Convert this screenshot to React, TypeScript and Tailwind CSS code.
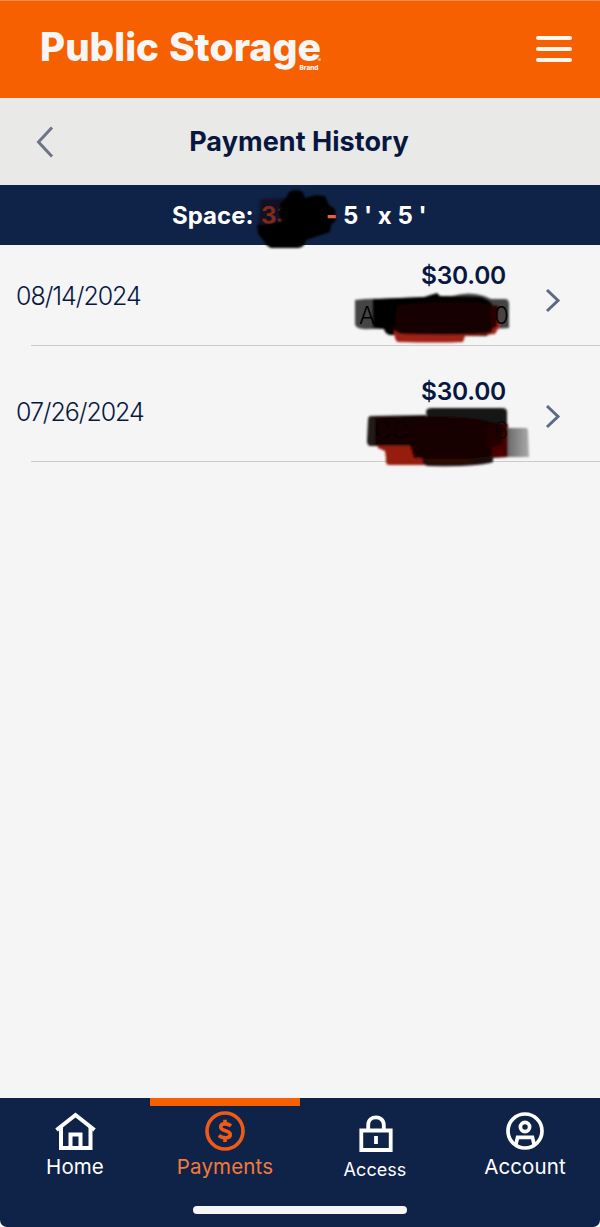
import type { ReactNode } from "react";

type Payment = {
  date: string;
  amount: string;
  method: ReactNode;
  scribble: ReactNode;
};

type Tab = {
  label: string;
  icon: ReactNode;
  active?: boolean;
  labelClass: string;
};

const payments: Payment[] = [
  {
    date: "08/14/2024",
    amount: "$30.00",
    method: (
      <>
        <text x="19" y="74" fontSize="24" fontWeight="300" fill="#000">A</text>
        <text x="154" y="74" fontSize="24" fontWeight="300" fill="#000">0</text>
      </>
    ),
    scribble: (
      <g filter="url(#soft)">
        <path d="M15 50 Q30 48 40 49 L112 46 Q130 41 144 46 L151 49 L166 49 Q169 50 169 54 L169 78 L150 79 L30 79 Q15 80 15 74 Z" fill="#000" fillOpacity=".72" />
        <path d="M33 49 L84 47 L97 43 L100 46 L140 47 Q150 50 153 56 L152 83 L146 86 L50 85 Q45 84 44 79 L33 77 Z" fill="#000" />
        <path d="M54 78 L148 60 L157 55 L159 77 L155 84 L125 86 L123 92 Q100 93 58 92 Q54 91 54 78 Z" fill="#a02313" />
        <path d="M57 55 Q100 50 148 53 L153 60 L152 82 Q142 86 60 84 L54 80 Z" fill="#170201" />
        <path d="M151 56 L158 55 L157 76 L151 80 Z" fill="#2a0504" />
      </g>
    ),
  },
  {
    date: "07/26/2024",
    amount: "$30.00",
    method: (
      <>
        <text x="34" y="73" fontSize="24" fontWeight="300" fill="#000" fillOpacity=".6">CC</text>
        <text x="154" y="73" fontSize="24" fontWeight="300" fill="#000" fillOpacity=".6">6</text>
      </>
    ),
    scribble: (
      <g filter="url(#soft)">
        <path d="M160 62 L186 62 Q188 62 188 66 L189 91 L160 91 Z" fill="url(#fade)" />
        <path d="M37 78 L90 76 L140 90 L130 98 L82 99 L49 99 Q45 99 46 92 L45 85 L38 82 Z" fill="#961a07" />
        <path d="M86 46 Q86 42 92 42 L162 42 Q167 42 167 46 L167 65 L90 65 Z" fill="#151716" />
        <path d="M31 50 L86 49 L90 80 L31 80 Q27 80 27 75 L28 54 Q28 50 31 50 Z" fill="#201a19" />
        <path d="M82 92 L153 90 L153 96 Q140 101 88 100 Q82 99 82 92 Z" fill="#1c1110" />
        <path d="M84 91 L138 91 L128 98 L88 98 Z" fill="#2c0703" />
        <path d="M35 52 Q95 48 138 53 L160 58 L155 90 L125 93 L74 92 L70 79 L35 79 Z" fill="#190201" />
        <path d="M152 60 L168 58 L168 91 L152 92 Z" fill="#480601" />
        <path d="M146 58 L165 60 L162 78 L146 84 Z" fill="#230301" />
      </g>
    ),
  },
];

const tabs: Tab[] = [
  {
    label: "Home",
    labelClass: "text-[20.5px] tracking-[0.1px]",
    icon: (
      <svg width="42" height="42" viewBox="0 0 42 42" fill="none" stroke="#fff" strokeWidth="4">
        <path d="M2.5 20 L21.5 5 L40.5 20" />
        <path d="M7 17 V38 H36.5 V17" />
        <path d="M16.5 38 V24.5 H26.5 V38" />
      </svg>
    ),
  },
  {
    label: "Payments",
    active: true,
    labelClass: "text-[20.5px] tracking-[0.15px] text-[#f47a3a]",
    icon: (
      <svg width="42" height="42" viewBox="0 0 42 42" fill="none" stroke="#ef5a18" strokeWidth="3.6">
        <circle cx="21" cy="21" r="18" />
        <path d="M27 15.8 C24 13.4 16.7 12.7 16.7 17 C16.7 22 26.3 19.4 26.3 24.6 C26.3 29 18.5 28.6 14.8 25.5 M21 9.7 V14.5 M21 27.3 V32" />
      </svg>
    ),
  },
  {
    label: "Access",
    labelClass: "mt-[3px] text-[18px] tracking-[0.05px]",
    icon: (
      <svg width="42" height="42" viewBox="0 0 42 42" fill="none" stroke="#fff" strokeWidth="3.8">
        <path d="M7.3 20.5 H36.7 V40 H7.3 Z" />
        <path d="M14.2 20 V15 C14.2 4.8 29.8 4.8 29.8 15 V20" />
        <path d="M22 26 V34" />
      </svg>
    ),
  },
  {
    label: "Account",
    labelClass: "text-[20.5px] tracking-[0.1px]",
    icon: (
      <svg width="42" height="42" viewBox="0 0 42 42" fill="none" stroke="#fff" strokeWidth="3.7">
        <circle cx="21" cy="21" r="17" />
        <circle cx="21" cy="17" r="4.6" />
        <path d="M11.7 35 L13.6 27.3 H28.4 L30.3 35" />
      </svg>
    ),
  },
];

function Header() {
  return (
    <header className="flex h-[98px] shrink-0 justify-between border-t border-[#ff8a4c] bg-[#f66000]">
      <svg width="330" height="80" viewBox="0 0 330 80" fill="#f6f6f6" fontFamily="Inter, sans-serif" fontWeight="800" aria-label="Public Storage">
        <text x="40" y="60" fontSize="39" textLength="119" lengthAdjust="spacingAndGlyphs">Public</text>
        <text x="169" y="60" fontSize="39" textLength="152" lengthAdjust="spacingAndGlyphs">Storage</text>
        <text x="299.5" y="69" fontSize="6.5" textLength="19" lengthAdjust="spacingAndGlyphs">Brand</text>
        <text x="318" y="60.5" fontSize="4.5">®</text>
      </svg>
      <button className="mr-7 mt-[35px] flex h-[26px] w-9 flex-col justify-between" aria-label="Menu">
        <span className="h-1 w-full rounded-full bg-[#fff7f0]" />
        <span className="h-1 w-full rounded-full bg-[#fff7f0]" />
        <span className="h-1 w-full rounded-full bg-[#fff7f0]" />
      </button>
    </header>
  );
}

function PaymentRow({ payment }: { payment: Payment }) {
  return (
    <li className="relative flex h-[116px] flex-col">
      <div className="flex flex-1 items-start justify-between pl-4 pr-[39px]">
        <span className="mt-12 text-[25px] font-light leading-9 tracking-[-1.05px]">{payment.date}</span>
        <div className="flex">
          <span className="mr-[38px] mt-[27px] text-[24.5px] font-semibold leading-9 tracking-[-0.25px]">{payment.amount}</span>
          <svg className="mt-[57px]" width="17" height="26" viewBox="0 0 17 26" fill="none" stroke="#5e6985" strokeWidth="3">
            <path d="M3 3 L14 13.5 L3 24" />
          </svg>
        </div>
      </div>
      <div className="ml-[31px] h-[1.5px] bg-[#cbcbcb]" />
      <svg className="absolute left-[340px] top-5" width="200" height="105" viewBox="0 0 200 105" fontFamily="Inter, sans-serif">
        {payment.scribble}
        {payment.method}
      </svg>
    </li>
  );
}

function TabBar() {
  return (
    <nav className="flex h-[129px] shrink-0 flex-col items-center rounded-b-[7px] bg-[#0f2348] text-white">
      <div className="grid w-full flex-1 grid-cols-4">
        {tabs.map((tab) => (
          <a key={tab.label} className="flex flex-col items-center">
            <span className={tab.active ? "h-2 w-full bg-[#f66000]" : "h-2 w-full"} />
            <span className="mt-1">{tab.icon}</span>
            <span className={`leading-[30px] ${tab.labelClass}`}>{tab.label}</span>
          </a>
        ))}
      </div>
      <span className="mb-[13px] h-2 w-[214px] rounded-full bg-[#f6f6f6]" />
    </nav>
  );
}

export default function App() {
  return (
    <div className="flex h-[1227px] w-[600px] flex-col overflow-hidden bg-white font-['Inter',sans-serif] text-[#08173f]">
      <svg className="absolute" width="0" height="0">
        <defs>
          <filter id="soft">
            <feGaussianBlur stdDeviation="1.2" />
          </filter>
          <linearGradient id="fade">
            <stop offset="0" stopColor="#555" />
            <stop offset="1" stopColor="#aaa" />
          </linearGradient>
        </defs>
      </svg>

      <Header />

      <div className="flex h-[87px] shrink-0 items-center bg-[#e9e9e7]">
        <svg className="ml-[34px]" width="20" height="34" viewBox="0 0 20 34" fill="none" stroke="#6d7488" strokeWidth="3">
          <path d="M18 2.5 L4.5 17 L18 31.5" />
        </svg>
        <h1 className="flex-1 pr-[56px] pt-px text-center text-[27px] font-[650] tracking-[0.05px]">Payment History</h1>
      </div>

      <div className="relative z-10 flex h-[60px] shrink-0 items-center bg-[#0f2348] pl-[172px] pt-0.5 text-2xl font-[650] text-white">
        <span className="w-[89px]">Space:</span>
        <span className="w-[65px] text-[#f0563a]">33</span>
        <span className="z-10 w-[17px] font-extrabold text-[#e8623f]">-</span>
        <span>5 ' x 5 '</span>
        <svg className="absolute left-[250px] top-0" width="100" height="70" viewBox="0 0 100 70">
          <g filter="url(#soft)">
            <path d="M10 15 Q12 13 39 13 L39 44 L8 44 Z" fill="#1a0006" fillOpacity=".5" />
            <path d="M36 13 L39 7 Q46 3 53 7 L55 13 L66 10 L75 11 L79 20 L85 24 L86 35 L81 40 L80 47 L56 55 Q55 62 48 63 L21 63 Q16 61 14 56 L8 49 L7 40 L22 39 L32 36 L29 28 L30 18 Z" fill="#020103" />
          </g>
        </svg>
      </div>

      <main className="flex-1 bg-[#f5f5f5]">
        <ul className="-mt-[15px]">
          {payments.map((payment) => (
            <PaymentRow key={payment.date} payment={payment} />
          ))}
        </ul>
      </main>

      <TabBar />
    </div>
  );
}
